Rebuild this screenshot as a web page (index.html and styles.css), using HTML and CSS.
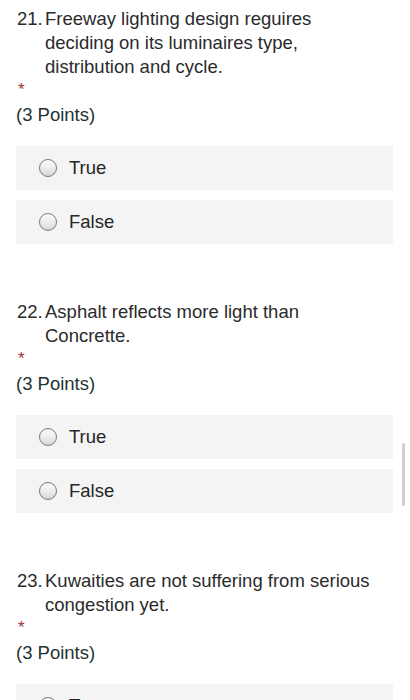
FILE: index.html
```html
<!DOCTYPE html>
<html>
<head>
<meta charset="utf-8">
<link rel="stylesheet" href="styles.css">
</head>
<body>
<div class="page">
  <section class="question">
    <div class="title"><span class="num">21.</span><span class="text">Freeway lighting design reguires deciding on its luminaires type, distribution and cycle.</span></div>
    <div class="req">*</div>
    <div class="points">(3 Points)</div>
    <div class="options">
      <div class="option"><span class="radio"></span><span class="label">True</span></div>
      <div class="option"><span class="radio"></span><span class="label">False</span></div>
    </div>
  </section>
  <section class="question">
    <div class="title"><span class="num">22.</span><span class="text">Asphalt reflects more light than Concrette.</span></div>
    <div class="req">*</div>
    <div class="points">(3 Points)</div>
    <div class="options">
      <div class="option"><span class="radio"></span><span class="label">True</span></div>
      <div class="option"><span class="radio"></span><span class="label">False</span></div>
    </div>
  </section>
  <section class="question">
    <div class="title"><span class="num">23.</span><span class="text">Kuwaities are not suffering from serious congestion yet.</span></div>
    <div class="req">*</div>
    <div class="points">(3 Points)</div>
    <div class="options">
      <div class="option"><span class="radio"></span><span class="label">True</span></div>
      <div class="option"><span class="radio"></span><span class="label">False</span></div>
    </div>
  </section>
</div>
<div class="scrollbar"></div>
</body>
</html>
```

FILE: styles.css
```css
html, body {
  margin: 0;
  padding: 0;
  background: #ffffff;
  overflow: hidden;
}
body {
  font-family: "Liberation Sans", Arial, sans-serif;
  color: #2b2b2b;
}
.page {
  padding: 7px 17px 0 16px;
  display: flex;
  flex-direction: column;
  gap: 56px;
}
.title {
  display: flex;
  font-size: 18.5px;
  line-height: 24px;
  padding-left: 1px;
  width: 364px;
}
.num {
  width: 28px;
  flex: none;
}
.text {
  flex: 1;
}
.req {
  color: #a0303a;
  font-size: 17px;
  line-height: 15px;
  padding-top: 3px;
  padding-left: 2px;
}
.points {
  margin-top: 6px;
  font-size: 18.5px;
  line-height: 24px;
  color: #1f3333;
}
.options {
  margin-top: 19px;
  display: flex;
  flex-direction: column;
  gap: 10px;
  width: 377px;
}
.option {
  height: 44px;
  background: #f4f4f4;
  display: flex;
  align-items: center;
  padding-left: 23px;
}
.radio {
  width: 16px;
  height: 16px;
  border-radius: 50%;
  border: 1px solid #7a7a7a;
  background: linear-gradient(180deg, #fbfbfb 0%, #e9e9e9 60%, #d6d6d6 100%);
  flex: none;
}
.label {
  margin-left: 12px;
  font-size: 18.5px;
  color: #262626;
}
.scrollbar {
  position: fixed;
  left: 402px;
  top: 443px;
  width: 3px;
  height: 63px;
  border-radius: 2px;
  background: #cfcfcf;
}
```
